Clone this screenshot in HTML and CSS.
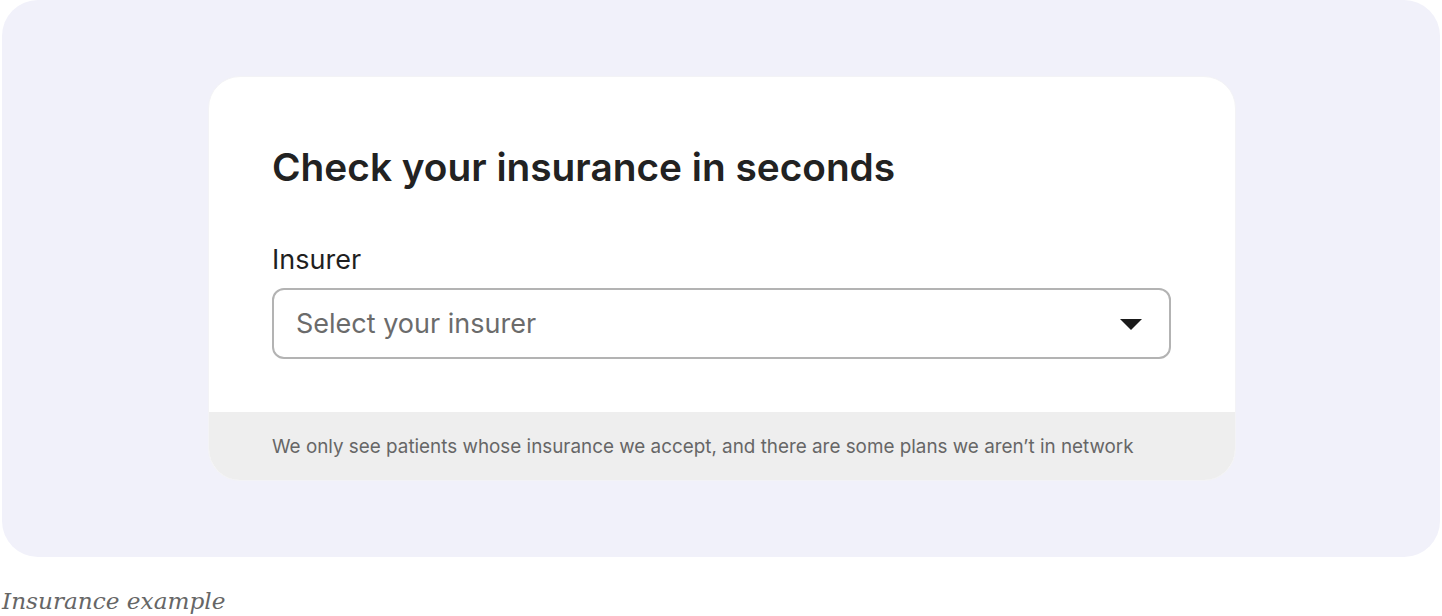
FILE: index.html
```html
<!DOCTYPE html>
<html>
<head>
<meta charset="utf-8">
<link rel="stylesheet" href="styles.css">
</head>
<body>
<figure class="figure">
  <div class="panel">
    <div class="card">
      <div class="card-body">
        <h1 class="title">Check your insurance in seconds</h1>
        <label class="label">Insurer</label>
        <div class="select">
          <span class="placeholder">Select your insurer</span>
          <svg class="caret" width="22" height="12" viewBox="0 0 22 12"><path d="M0 0 H22 L11 11 Z" fill="#1a1a1a"/></svg>
        </div>
      </div>
      <div class="card-footer">We only see patients whose insurance we accept, and there are some plans we aren’t in network</div>
    </div>
  </div>
  <figcaption class="caption">Insurance example</figcaption>
</figure>
</body>
</html>
```
FILE: styles.css
```css
* { box-sizing: border-box; }
html, body { margin: 0; padding: 0; background: #ffffff; }
body { font-family: Inter, "Liberation Sans", sans-serif; }
.figure { margin: 0; padding-left: 2px; width: 1440px; }
.panel {
  background: #f1f1fa;
  border-radius: 36px;
  height: 557px;
  padding-top: 76px;
  display: flex;
  justify-content: center;
}
.card {
  width: 1028px;
  height: 405px;
  background: #ffffff;
  border-radius: 32px;
  border: 1px solid #f3f3f6;
  overflow: hidden;
  display: flex;
  flex-direction: column;
  margin-left: 2px;
}
.card-body {
  flex: 1;
  padding: 67px 63px 0 63px;
}
.title {
  margin: 0;
  font-size: 38.8px;
  font-weight: 600;
  line-height: 46px;
  color: #222222;
}
.label {
  display: block;
  margin-top: 53px;
  font-size: 27px;
  line-height: 34px;
  color: #1f1f1f;
}
.select {
  margin-top: 11px;
  width: 899px;
  height: 71px;
  border: 2px solid #b3b3b3;
  border-radius: 12px;
  display: flex;
  align-items: center;
  justify-content: space-between;
  padding: 0 27px 0 22px;
}
.placeholder {
  font-size: 27px;
  color: #6b6b6b;
}
.caret { display: block; margin-top: 2px; }
.card-footer {
  height: 68px;
  background: #eeeeee;
  display: flex;
  align-items: center;
  padding: 0 63px;
  font-size: 18.85px;
  color: #666666;
}
.caption {
  margin-top: 30px;
  font-family: "DejaVu Serif", serif;
  font-style: italic;
  font-size: 23.2px;
  color: #666666;
}
```
